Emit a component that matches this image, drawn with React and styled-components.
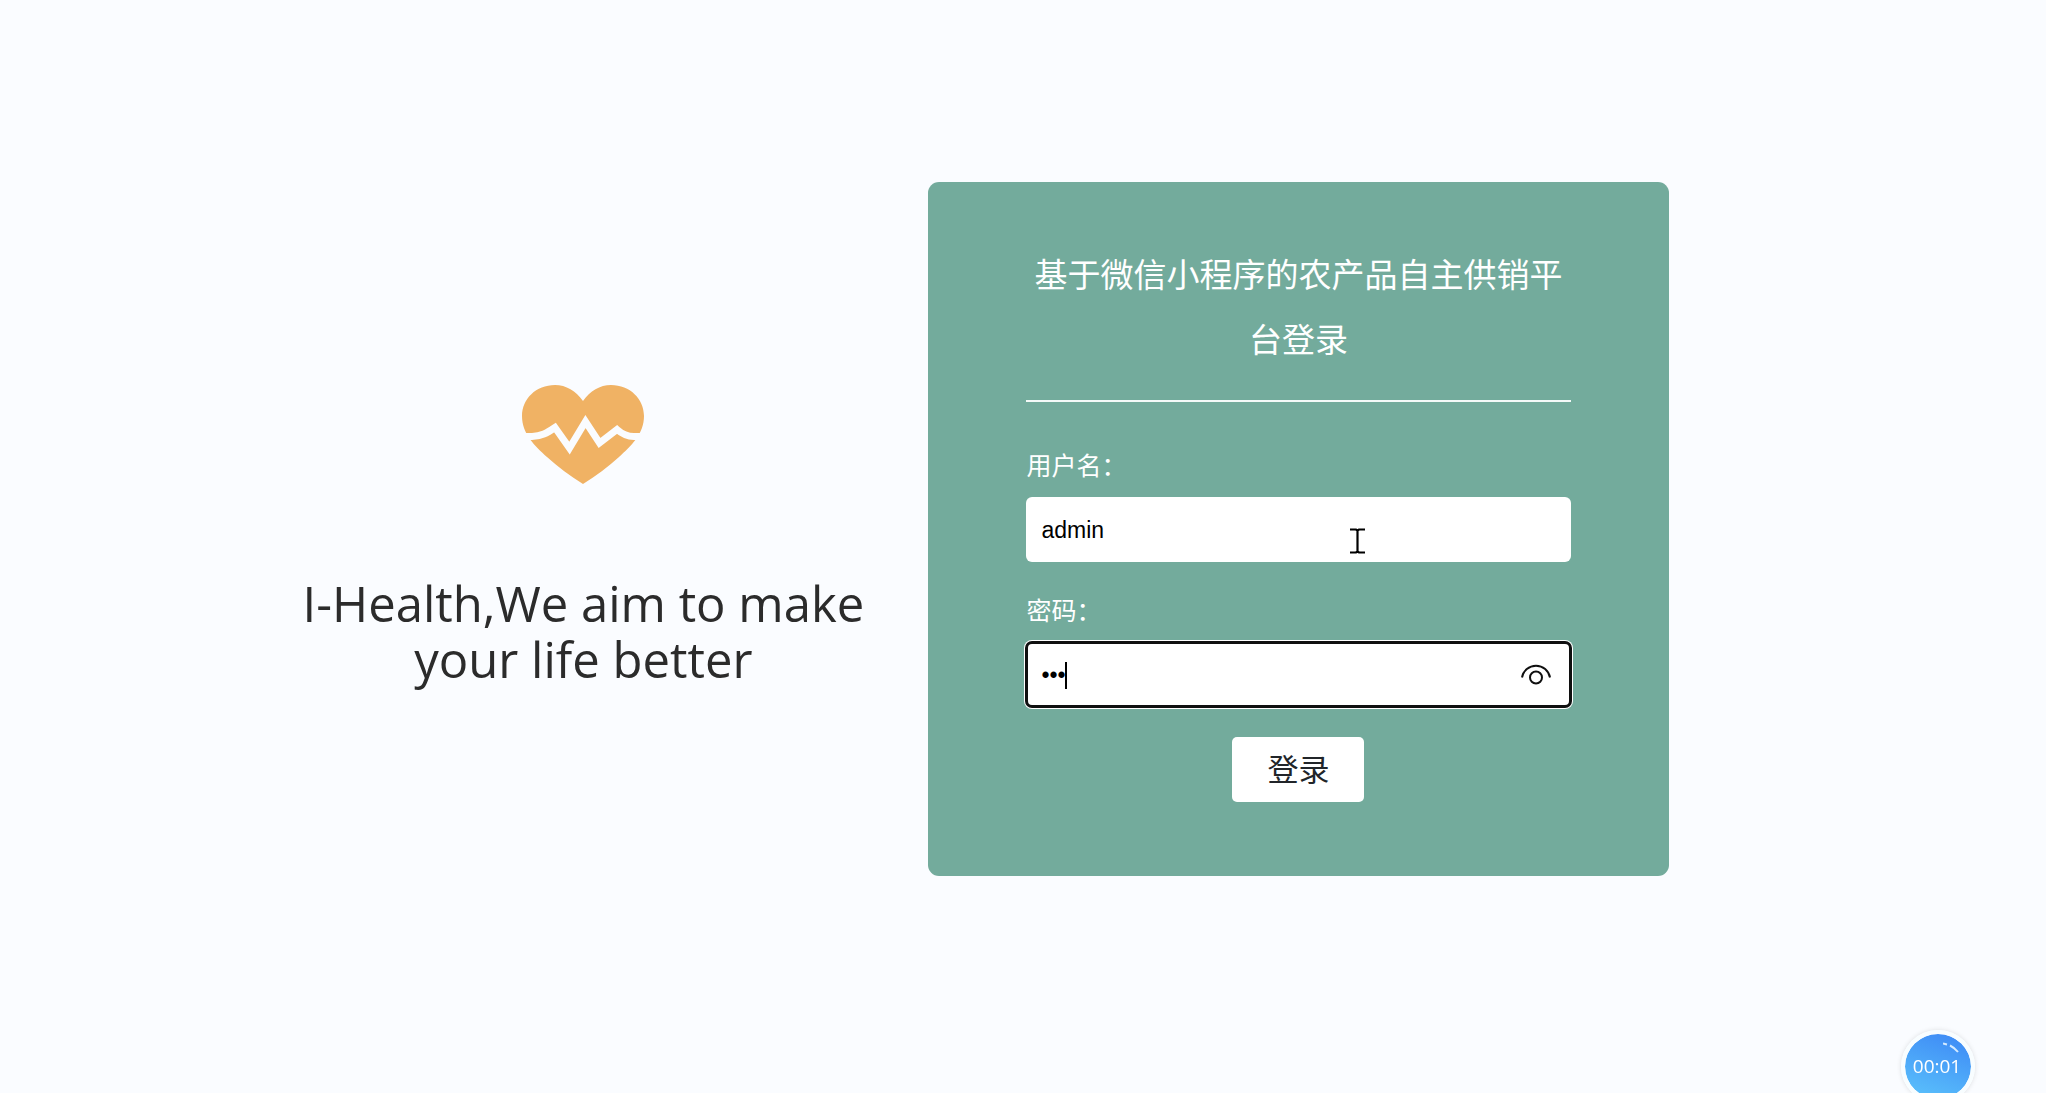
import React, { useState } from 'react';
import styled, { createGlobalStyle } from 'styled-components';

const App = () => {
    const [username, setUsername] = useState('admin')
    const [password, setPassword] = useState('123')
    const [visible, setVisible] = useState(false)

    return (
    <>
        <GlobalStyle />
        <Page>
            <Brand>
                <Heart />
                <Slogan>I-Health,We aim to make your life better</Slogan>
            </Brand>
            <Panel onSubmit={e => e.preventDefault()}>
                <Title>基于微信小程序的农产品自主供销平台登录</Title>
                <Label htmlFor='username'>用户名：</Label>
                <Field>
                    <Input
                        id='username'
                        type='text'
                        value={username}
                        onChange={e => setUsername(e.target.value)}
                    />
                    <Pointer />
                </Field>
                <Label htmlFor='password'>密码：</Label>
                <Field>
                    <Input
                        id='password'
                        type={visible ? 'text' : 'password'}
                        value={password}
                        onChange={e => setPassword(e.target.value)}
                        $active
                    />
                    <Caret />
                    <Reveal type='button' aria-label='显示密码' onClick={() => setVisible(!visible)}>
                        <Eye />
                    </Reveal>
                </Field>
                <Submit type='submit'>登录</Submit>
            </Panel>
            <Timer>
                <Shine />
                00:01
            </Timer>
        </Page>
    </>
    )
}

const Heart = () => (
    <HeartSvg viewBox='0 0 122 100'>
        <path
            fill='#f0b264'
            d='M61 16C54 6 44 0 33 0C14 0 0 14 0 31C0 49 13 61 25 72C36 82 48 91 61 99C74 91 86 82 97 72C109 61 122 49 122 31C122 14 108 0 89 0C78 0 68 6 61 16Z'
        />
        <path
            fill='none'
            stroke='#fafcff'
            strokeWidth='7'
            strokeMiterlimit='10'
            d='M0 51.500H10C19 51.500 25 48 33 42.500L47.500 63L63.500 36.500L77.500 58L95 44.500C100 49 105 51.500 112 51.500H122'
        />
    </HeartSvg>
)

const Pointer = () => (
    <PointerSvg viewBox='0 0 15 26'>
        <path d='M0 1.500H6L7.500 2.500L9 1.500H15M0 24.500H6L7.500 23.500L9 24.500H15M7.500 2V24' fill='none' stroke='#000' strokeWidth='2.200' />
    </PointerSvg>
)

const Eye = () => (
    <EyeSvg viewBox='0 0 32 22' fill='none' stroke='#101010' strokeWidth='2'>
        <path d='M2 14.500A14.200 14.200 0 0 1 30 14.500' />
        <circle cx='16' cy='14.500' r='6' />
    </EyeSvg>
)

const Shine = () => (
    <ShineSvg viewBox='0 0 16 12' fill='none' stroke='#d5ebff' strokeWidth='2'>
        <path d='M0 1.500L4 2.500M7 3.500C10 5 13 7.500 15 10' />
    </ShineSvg>
)

const GlobalStyle = createGlobalStyle`
    body {
        margin: 0;
        background-color: #fafcff;
        font-family: 'Noto Sans CJK SC', sans-serif;
    }
`

const Page = styled.main`
    display: grid;
    grid-template-columns: 690fr 740fr;
    align-items: center;
    box-sizing: border-box;
    min-height: 100vh;
    padding: 0 18.45% 36px 11.65%;
`

const Brand = styled.section`
    display: flex;
    flex-direction: column;
    align-items: center;
    gap: 90px;
    padding-top: 14px;
`

const HeartSvg = styled.svg`
    width: 122px;
    height: 100px;
`

const Slogan = styled.p`
    max-width: 600px;
    margin: 0;
    color: #2b2b2b;
    font-family: 'Open Sans', sans-serif;
    font-size: 49px;
    line-height: 56px;
    text-align: center;
`

const Panel = styled.form`
    display: flex;
    flex-direction: column;
    padding: 59px 98px 74px;
    border-radius: 11px;
    background-color: #73ab9c;
`

const Title = styled.h1`
    margin: 0 0 46px;
    padding-bottom: 29px;
    border-bottom: 2px solid #f4faf8;
    color: #fff;
    font-size: 33px;
    font-weight: 400;
    line-height: 65px;
    text-align: center;
`

const Label = styled.label`
    margin-bottom: 16px;
    color: #fff;
    font-size: 25px;
    line-height: 33px;
`

const Field = styled.div`
    position: relative;
    margin-bottom: 31px;

    &:last-of-type {
        margin-bottom: 30px;
    }
`

const Input = styled.input`
    display: block;
    box-sizing: border-box;
    width: 100%;
    height: 65px;
    padding: 2px 15px 0;
    border: none;
    border-radius: 6px;
    background-color: #fff;
    color: #000;
    font-family: 'Liberation Sans', sans-serif;
    font-size: 23px;
    outline: ${({ $active }) => $active ? '3px solid #101010' : 'none'};
    outline-offset: -2px;
    box-shadow: ${({ $active }) => $active ? '0 0 0 2px #fff' : 'none'};
`

const PointerSvg = styled.svg`
    position: absolute;
    top: 31px;
    left: 324px;
    width: 15px;
    height: 26px;
    pointer-events: none;
`

const Caret = styled.span`
    position: absolute;
    top: 20px;
    left: 39px;
    width: 2px;
    height: 27px;
    background-color: #000;
`

const Reveal = styled.button`
    position: absolute;
    top: 0;
    right: 19px;
    display: flex;
    align-items: center;
    height: 100%;
    padding: 0;
    border: none;
    background: none;
`

const EyeSvg = styled.svg`
    width: 32px;
    height: 22px;
`

const Submit = styled.button`
    align-self: center;
    height: 65px;
    padding: 0 35px 4px;
    border: none;
    border-radius: 5px;
    background-color: #fff;
    color: #212529;
    font-family: inherit;
    font-size: 31px;
`

const Timer = styled.div`
    position: fixed;
    right: 71px;
    bottom: -10px;
    display: flex;
    align-items: center;
    justify-content: center;
    box-sizing: border-box;
    width: 74px;
    height: 73px;
    padding: 0 2px 2px 0;
    border: 4px solid #f8fdff;
    border-radius: 50%;
    background: linear-gradient(20deg, #5cc4fc, #3c87f5);
    background-clip: padding-box;
    box-shadow: 0 0 5px rgba(0, 0, 0, .12);
    color: #fff;
    font-family: 'Open Sans', sans-serif;
    font-size: 19px;
`

const ShineSvg = styled.svg`
    position: absolute;
    top: 8px;
    right: 12px;
    width: 16px;
    height: 12px;
`

export default App;
